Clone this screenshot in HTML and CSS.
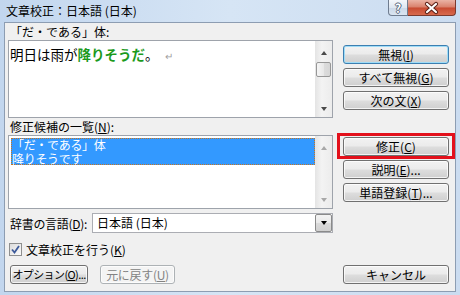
FILE: index.html
```html
<!DOCTYPE html>
<html lang="ja">
<head>
<meta charset="utf-8">
<title>文章校正</title>
<link rel="stylesheet" href="styles.css">
</head>
<body>
<div class="window">
  <div class="titlebar">
    <span class="title">文章校正：日本語 (日本)</span>
    <div class="caption-buttons">
      <div class="cap-help">?</div>
      <div class="cap-close">
        <svg width="47" height="16" viewBox="0 0 47 16">
          <path d="M19 4 L28 12 M28 4 L19 12" stroke="#5a2118" stroke-width="4.2" stroke-linecap="round"/>
          <path d="M19 4 L28 12 M28 4 L19 12" stroke="#ffffff" stroke-width="2.2" stroke-linecap="round"/>
        </svg>
      </div>
    </div>
  </div>
  <div class="client">
    <div class="left">
      <div class="label">「だ・である」体:</div>
      <div class="textbox">
        <div class="tb-text">明日は雨が<b class="hl">降りそうだ</b>。<span class="ret">↵</span></div>
        <div class="vscroll">
          <div class="sb-up"><span class="arr-up"></span></div>
          <div class="sb-thumb"></div>
          <div class="sb-fill"></div>
          <div class="sb-down"><span class="arr-down"></span></div>
        </div>
      </div>
      <div class="label">修正候補の一覧(<u>N</u>):</div>
      <div class="listbox">
        <div class="lb-items">
          <div class="sel">
            <div class="sel-line">「だ・である」体</div>
            <div class="sel-line">降りそうです</div>
          </div>
        </div>
        <div class="vscroll disabled">
          <div class="sb-up"><span class="arr-up"></span></div>
          <div class="sb-fill"></div>
          <div class="sb-down"><span class="arr-down"></span></div>
        </div>
      </div>
      <div class="dict-row">
        <span class="dict-label">辞書の言語(<u>D</u>):</span>
        <div class="combo">
          <span class="combo-text">日本語 (日本)</span>
          <div class="dd"><span class="arr-dd"></span></div>
        </div>
      </div>
      <div class="check-row">
        <span class="checkbox">
          <svg width="11" height="11" viewBox="0 0 11 11"><path d="M2 5.5 L4.5 8.5 L9 2" fill="none" stroke="#3d5a9a" stroke-width="1.8"/></svg>
        </span>
        <span>文章校正を行う(<u>K</u>)</span>
      </div>
      <div class="bottom-row">
        <button class="btn btn-options">オプション(<u>O</u>)...</button>
        <button class="btn btn-undo" disabled>元に戻す(<u>U</u>)</button>
      </div>
    </div>
    <div class="right">
      <div class="btn-group">
        <button class="btn default">無視(<u>I</u>)</button>
        <button class="btn">すべて無視(<u>G</u>)</button>
        <button class="btn">次の文(<u>X</u>)</button>
      </div>
      <div class="btn-group group2">
        <button class="btn marked">修正(<u>C</u>)</button>
        <button class="btn">説明(<u>E</u>)...</button>
        <button class="btn">単語登録(<u>T</u>)...</button>
      </div>
      <button class="btn cancel">キャンセル</button>
    </div>
  </div>
</div>
</body>
</html>
```
FILE: styles.css
```css
* { box-sizing: border-box; }
html, body { margin: 0; padding: 0; }
body {
  width: 460px;
  height: 295px;
  overflow: hidden;
  font-family: "Noto Sans CJK JP", "Noto Sans", sans-serif;
  font-size: 12px;
  color: #000;
  background: linear-gradient(90deg, #c2d6ee, #d6e5f5 50%, #cbdcf0);
}
.window {
  width: 460px;
  height: 295px;
  display: flex;
  flex-direction: column;
}
.titlebar {
  height: 22px;
  display: flex;
  justify-content: space-between;
  align-items: flex-start;
  padding: 0 4px 0 6px;
}
.title {
  line-height: 22px;
  font-size: 12px;
}
.caption-buttons { display: flex; }
.cap-help {
  width: 20px;
  height: 16px;
  border: 1px solid #6f7c8f;
  border-top: none;
  border-radius: 0 0 0 4px;
  background: linear-gradient(#f4f7fb, #dfe7f1 50%, #cbd8e8 52%, #dae5f1);
  color: #fff;
  font-weight: bold;
  font-size: 12px;
  line-height: 15px;
  text-align: center;
  text-shadow: 1px 0 0 #56657a, -1px 0 0 #56657a, 0 1px 0 #56657a, 0 -1px 0 #56657a;
}
.cap-close {
  width: 48px;
  height: 16px;
  border: 1px solid #7b3a2e;
  border-top: none;
  border-left: none;
  border-radius: 0 0 4px 0;
  background: linear-gradient(#eab3a5, #d9806b 48%, #c74a31 52%, #d86a4d);
  display: flex;
}
.client {
  flex: 1;
  margin: 0 4px 3px 4px;
  border: 1px solid #8d9db2;
  background: #f0f0f0;
  display: flex;
  gap: 10px;
  padding-left: 3px;
}
.left {
  width: 325px;
  display: flex;
  flex-direction: column;
}
.label {
  height: 17px;
  line-height: 17px;
  padding-left: 2px;
  white-space: nowrap;
}
u { text-decoration: underline; text-underline-offset: 1px; }
.textbox {
  height: 78px;
  border: 1px solid #9ea3ab;
  background: #fff;
  display: flex;
}
.tb-text {
  flex: 1;
  padding: 3px 0 0 1px;
  font-size: 13.5px;
  line-height: 20px;
  white-space: nowrap;
}
.hl { color: #1c9a1c; font-weight: bold; }
.ret { color: #a0a0a0; font-size: 10px; margin-left: 6px; }
.vscroll {
  width: 17px;
  display: flex;
  flex-direction: column;
  align-items: center;
  background: linear-gradient(90deg, #e4e4e4, #f3f3f3 40%, #ececec);
}
.sb-up { height: 21px; display: flex; align-items: center; justify-content: center; padding-top: 2px; }
.sb-down { height: 17px; display: flex; align-items: center; justify-content: center; }
.sb-fill { flex: 1; }
.sb-thumb {
  width: 15px;
  height: 15px;
  border: 1px solid #979797;
  border-radius: 2px;
  background: linear-gradient(90deg, #f5f5f5, #e8e8e8 50%, #dcdcdc 52%, #d6d6d6);
}
.arr-up {
  width: 0; height: 0;
  border-left: 3.5px solid transparent;
  border-right: 3.5px solid transparent;
  border-bottom: 4px solid #4a4a4a;
}
.arr-down {
  width: 0; height: 0;
  border-left: 3.5px solid transparent;
  border-right: 3.5px solid transparent;
  border-top: 4px solid #4a4a4a;
}
.disabled .arr-up { border-bottom-color: #a8a8a8; }
.disabled .arr-down { border-top-color: #a8a8a8; }
.listbox {
  height: 74px;
  border: 1px solid #9ea3ab;
  background: #fff;
  display: flex;
}
.lb-items { flex: 1; padding: 2px 0 0 2px; }
.sel {
  background: #3399ff;
  color: #fff;
  outline: 1px dotted #c8741f;
  outline-offset: -1px;
  padding: 0 0 0 1px;
  height: 27px;
}
.sel-line {
  height: 13.5px;
  line-height: 13.5px;
  white-space: nowrap;
  letter-spacing: -0.3px;
}
.dict-row {
  margin-top: 4px;
  height: 20px;
  display: flex;
  align-items: center;
  padding-left: 2px;
}
.dict-label { white-space: nowrap; letter-spacing: -0.3px; }
.combo {
  margin-left: auto;
  width: 241px;
  height: 20px;
  border: 1px solid #abadb3;
  background: #fff;
  display: flex;
  align-items: center;
}
.combo-text { flex: 1; padding-left: 4px; line-height: 18px; white-space: nowrap; }
.dd {
  width: 17px;
  height: 18px;
  border: 1px solid #8a8a8a;
  border-radius: 2px;
  background: linear-gradient(#f3f3f3, #e9e9e9 50%, #dadada 52%, #d0d0d0);
  display: flex;
  align-items: center;
  justify-content: center;
}
.arr-dd {
  width: 0; height: 0;
  border-left: 3.5px solid transparent;
  border-right: 3.5px solid transparent;
  border-top: 4px solid #000;
}
.check-row {
  margin-top: 10px;
  height: 13px;
  display: flex;
  align-items: center;
  gap: 4px;
  padding-left: 1px;
  white-space: nowrap;
}
.checkbox {
  width: 13px;
  height: 13px;
  border: 1px solid #8e8f8f;
  background: linear-gradient(135deg, #dcdcdc, #fbfbfb);
  display: flex;
  align-items: center;
  justify-content: center;
}
.bottom-row {
  margin-top: 9px;
  display: flex;
  gap: 12px;
  padding-left: 2px;
}
.btn {
  height: 19px;
  border: 1px solid #707070;
  border-radius: 3px;
  background: linear-gradient(#f2f2f2, #ebebeb 48%, #dddddd 52%, #cfcfcf);
  box-shadow: inset 0 0 0 1px rgba(255, 255, 255, 0.75);
  font-family: inherit;
  font-size: 12px;
  line-height: 17px;
  padding: 0;
  color: #000;
  text-align: center;
  display: block;
  white-space: nowrap;
  overflow: hidden;
}
.btn-options { width: 78px; font-size: 11px; letter-spacing: -0.6px; }
.btn-undo {
  width: 75px;
  border-color: #adb2b5;
  background: #f4f4f4;
  color: #838383;
  letter-spacing: -0.3px;
}
.right {
  width: 106px;
  display: flex;
  flex-direction: column;
  padding: 22px 0 7px 0;
}
.btn-group { display: flex; flex-direction: column; gap: 4px; }
.right .btn { width: 106px; }
.group2 { margin-top: 27px; }
.btn.default {
  border-color: #3c7fb1;
  box-shadow: inset 0 0 0 1px #9fdcf7;
}
.btn.marked { position: relative; overflow: visible; }
.btn.marked::after {
  content: "";
  position: absolute;
  left: -7px;
  right: -7px;
  top: -5px;
  bottom: -4px;
  border: 3px solid #e3101b;
}
.cancel { margin-top: auto; }
```
